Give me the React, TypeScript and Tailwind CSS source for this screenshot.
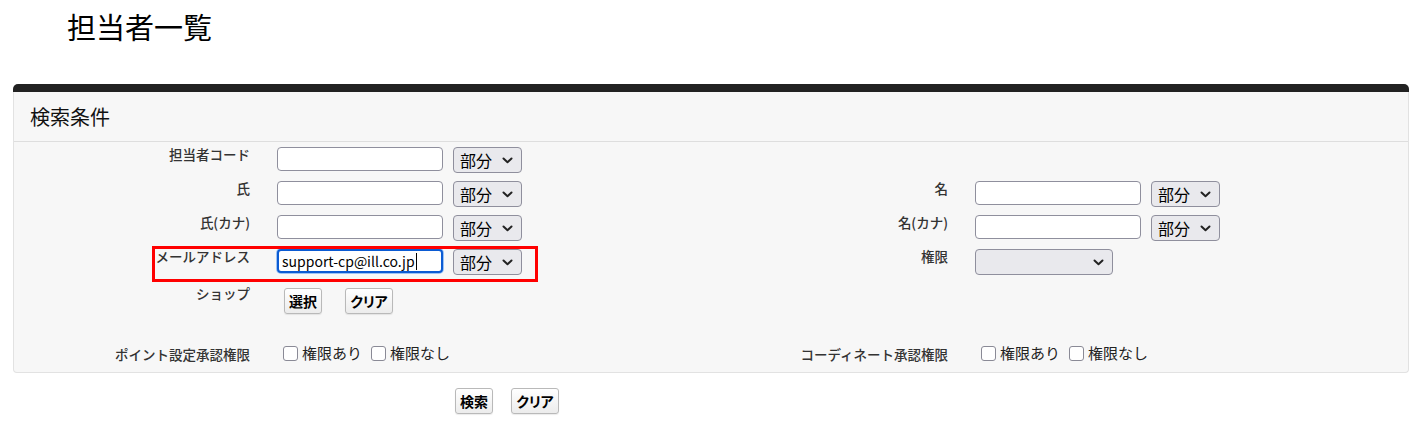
import React from "react";

const FONT = { fontFamily: '"Noto Sans CJK JP", "Noto Sans", sans-serif' };

const Chevron = () => (
  <svg width="11" height="7" viewBox="0 0 11 7" className="pointer-events-none">
    <path d="M1.5 1.5 L5.5 5.2 L9.5 1.5" fill="none" stroke="#222" strokeWidth="2" strokeLinecap="round" strokeLinejoin="round" />
  </svg>
);

const MatchSelect = () => (
  <div className="w-[69px] h-[26px] rounded-[4px] border border-[#8f8f9d] bg-[#e9e9ed] flex items-center justify-between pl-[6px] pr-[8px]">
    <span className="text-[16px] leading-none text-black">部分</span>
    <Chevron />
  </div>
);

const TextBox = ({ value, focused }: { value?: string; focused?: boolean }) => (
  <div
    className={
      focused
        ? "w-[166px] h-[24px] rounded-[4px] border-2 border-[#0b5bd3] bg-white flex items-center pl-[3px] shadow-[0_0_0_1px_#9cc3f5]"
        : "w-[166px] h-[24px] rounded-[4px] border border-[#8f8f9d] bg-white"
    }
  >
    {value && (
      <>
        <span className="text-[14px] leading-none text-black">{value}</span>
        <span className="w-px h-[17px] bg-black ml-[1px]" />
      </>
    )}
  </div>
);

const Btn = ({ children, narrow }: { children: React.ReactNode; narrow?: boolean }) => (
  <button
    className={
      narrow
        ? "h-[26px] pl-[4px] pr-[6px] rounded-[3px] border border-[#b9b9b9] bg-gradient-to-b from-white to-[#ececec] shadow-[0_1px_1px_rgba(0,0,0,0.08)] text-[14px] font-bold leading-none text-black tracking-[-2px]"
        : "h-[26px] px-[4px] rounded-[3px] border border-[#b9b9b9] bg-gradient-to-b from-white to-[#ececec] shadow-[0_1px_1px_rgba(0,0,0,0.08)] text-[14px] font-bold leading-none text-black"
    }
  >
    {children}
  </button>
);

const Check = ({ label }: { label: string }) => (
  <div className="flex items-center gap-[4px]">
    <span className="w-[15px] h-[15px] rounded-[3px] border border-[#8a8a96] bg-white mt-[3px]" />
    <span className="text-[15px] leading-none text-[#222]">{label}</span>
  </div>
);

const Label = ({ children, pt = "pt-[2px]" }: { children: React.ReactNode; pt?: string }) => (
  <div className={`text-right text-[13.5px] leading-[18px] font-medium text-[#333] ${pt}`}>{children}</div>
);

const Fields = ({ children }: { children: React.ReactNode }) => (
  <div className="pl-[27px] pt-[4px] flex items-start gap-[10px]">{children}</div>
);

export default function App() {
  return (
    <div className="w-[1410px] h-[425px] bg-white overflow-hidden" style={FONT}>
      <h1 className="pl-[67px] pt-[9px] text-[29px] leading-[34px] text-black font-normal">担当者一覧</h1>

      <div className="mt-[41px] ml-[13px] mr-[1px]">
        <div className="h-[8px] bg-[#222] rounded-t-[5px]" />
        <div className="border-x border-b border-[#e2e2e2] rounded-b-[4px] bg-[#f7f7f7]">
          <div className="h-[50px] border-b border-[#dedede] flex items-center pl-[16px] text-[20px] text-[#111]">
            検索条件
          </div>

          <div className="pt-[1px]">
            <div className="grid grid-cols-[236px_462px_236px_1fr] h-[34px]">
              <Label>担当者コード</Label>
              <Fields>
                <TextBox />
                <MatchSelect />
              </Fields>
              <div />
              <div />
            </div>

            <div className="grid grid-cols-[236px_462px_236px_1fr] h-[34px]">
              <Label>氏</Label>
              <Fields>
                <TextBox />
                <MatchSelect />
              </Fields>
              <Label>名</Label>
              <Fields>
                <TextBox />
                <MatchSelect />
              </Fields>
            </div>

            <div className="grid grid-cols-[236px_462px_236px_1fr] h-[34px]">
              <Label>氏(カナ)</Label>
              <Fields>
                <TextBox />
                <MatchSelect />
              </Fields>
              <Label>名(カナ)</Label>
              <Fields>
                <TextBox />
                <MatchSelect />
              </Fields>
            </div>

            <div className="relative grid grid-cols-[236px_462px_236px_1fr] h-[34px]">
              <Label>メールアドレス</Label>
              <Fields>
                <TextBox value="support-cp@ill.co.jp" focused />
                <MatchSelect />
              </Fields>
              <Label>権限</Label>
              <Fields>
                <div className="w-[138px] h-[26px] rounded-[4px] border border-[#8f8f9d] bg-[#e9e9ed] flex items-center justify-end pr-[8px]">
                  <Chevron />
                </div>
              </Fields>
              <div className="absolute left-[138px] top-[1px] w-[386px] h-[36px] border-[3px] border-[#ff0000]" />
            </div>

            <div className="grid grid-cols-[236px_462px_236px_1fr] h-[61px]">
              <Label pt="pt-[5px]">ショップ</Label>
              <div className="pl-[34px] pt-[9px] flex items-start gap-[23px]">
                <Btn>選択</Btn>
                <Btn narrow>クリア</Btn>
              </div>
              <div />
              <div />
            </div>

            <div className="grid grid-cols-[236px_462px_236px_1fr] h-[32px]">
              <Label pt="pt-[5px]">ポイント設定承認権限</Label>
              <div className="pl-[33px] pt-[3px] flex items-start gap-[9px]">
                <Check label="権限あり" />
                <Check label="権限なし" />
              </div>
              <Label pt="pt-[5px]">コーディネート承認権限</Label>
              <div className="pl-[33px] pt-[3px] flex items-start gap-[9px]">
                <Check label="権限あり" />
                <Check label="権限なし" />
              </div>
            </div>
          </div>
        </div>

        <div className="mt-[15px] pl-[442px] flex gap-[18px]">
          <Btn>検索</Btn>
          <Btn narrow>クリア</Btn>
        </div>
      </div>
    </div>
  );
}
